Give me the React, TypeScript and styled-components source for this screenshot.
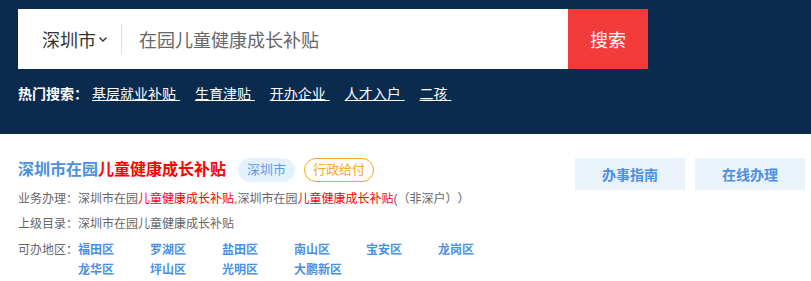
import React from "react";
import styled, { createGlobalStyle } from "styled-components";

const GlobalStyle = createGlobalStyle`
  body {
    margin: 0;
    background: #fff;
    font-family: "Liberation Sans", "Noto Sans CJK SC", sans-serif;
  }
`;

const Header = styled.header`
  height: 134px;
  box-sizing: border-box;
  padding: 9px 18px 0;
  background: #0a2a4e;
`;

const SearchBar = styled.div`
  display: flex;
  width: 630px;
  height: 60px;
  background: #fff;
`;

const CitySelect = styled.div`
  display: flex;
  align-items: center;
  padding-left: 24px;
  font-size: 18px;
  color: #333;

  svg {
    margin-left: 2px;
  }
`;

const Divider = styled.span`
  align-self: center;
  width: 1px;
  height: 30px;
  margin-left: 13px;
  background: #dedede;
`;

const Keyword = styled.div`
  flex: 1;
  display: flex;
  align-items: center;
  padding-left: 17px;
  font-size: 18px;
  color: #666;
`;

const SearchButton = styled.button`
  width: 80px;
  border: 0;
  background: #f23b3b;
  color: #fff;
  font-family: inherit;
  font-size: 18px;
  cursor: pointer;
`;

const HotRow = styled.div`
  display: flex;
  align-items: center;
  margin-top: 14px;
  height: 20px;
  font-size: 14px;
  color: #fff;
`;

const HotLabel = styled.span`
  font-weight: bold;
  margin-right: 4px;
`;

const HotLink = styled.a`
  color: #fff;
  text-decoration: underline;
  margin-right: 15px;
  white-space: pre;
`;

const Content = styled.section`
  display: flex;
  justify-content: space-between;
  align-items: flex-start;
  padding: 24px 6px 0 18px;
`;

const Info = styled.div`
  display: flex;
  flex-direction: column;
`;

const TitleRow = styled.div`
  display: flex;
  align-items: center;
  height: 24px;
  margin-bottom: 5px;
`;

const Title = styled.h1`
  margin: 0 12px 0 0;
  font-size: 16px;
  line-height: 24px;
  font-weight: bold;
  color: #4a90e2;
  white-space: nowrap;
`;

const Hit = styled.span`
  color: #ff0000;
`;

const Tag = styled.span<{ $variant: "area" | "type" }>`
  box-sizing: border-box;
  height: 24px;
  line-height: 22px;
  padding: 0 8px;
  margin-right: 9px;
  border-radius: 12px;
  font-size: 13px;
  border: 1px solid ${(p) => (p.$variant === "area" ? "#e5f1fd" : "#f5a623")};
  background: ${(p) => (p.$variant === "area" ? "#e5f1fd" : "#fff")};
  color: ${(p) => (p.$variant === "area" ? "#5a9be8" : "#f5a623")};
`;

const Line = styled.div`
  display: flex;
  font-size: 12px;
  line-height: 25px;
  color: #666;
  text-spacing-trim: space-all;
`;

const Label = styled.span`
  flex: none;
`;

const Regions = styled.div`
  display: flex;
  margin-top: 3px;
  font-size: 12px;
  line-height: 20px;
  color: #666;
`;

const RegionGrid = styled.div`
  display: grid;
  grid-template-columns: repeat(6, 72px);
`;

const Region = styled.a`
  color: #4a8fe6;
  font-weight: bold;
  text-decoration: none;
`;

const Actions = styled.div`
  display: flex;
  gap: 10px;
`;

const ActionButton = styled.button`
  width: 110px;
  height: 32px;
  border: 0;
  background: #eaf3fb;
  color: #4a90e2;
  font-family: inherit;
  font-size: 14px;
  font-weight: bold;
  cursor: pointer;
`;

const hotSearches = ["基层就业补贴", "生育津贴", "开办企业", "人才入户", "二孩"];
const regions = [
  "福田区", "罗湖区", "盐田区", "南山区", "宝安区", "龙岗区",
  "龙华区", "坪山区", "光明区", "大鹏新区",
];

const Chevron = () => (
  <svg width="10" height="10" viewBox="0 0 10 10">
    <path d="M1.5 3.5 L5 7 L8.5 3.5" fill="none" stroke="#333" strokeWidth="1.4" />
  </svg>
);

const App = () => {
  return (
    <>
      <GlobalStyle />
      <Header>
        <SearchBar>
          <CitySelect>
            深圳市
            <Chevron />
          </CitySelect>
          <Divider />
          <Keyword>在园儿童健康成长补贴</Keyword>
          <SearchButton>搜索</SearchButton>
        </SearchBar>
        <HotRow>
          <HotLabel>热门搜索：</HotLabel>
          {hotSearches.map((item) => (
            <HotLink key={item}>{item + " "}</HotLink>
          ))}
        </HotRow>
      </Header>
      <Content>
        <Info>
          <TitleRow>
            <Title>
              深圳市在园<Hit>儿童健康成长补贴</Hit>
            </Title>
            <Tag $variant="area">深圳市</Tag>
            <Tag $variant="type">行政给付</Tag>
          </TitleRow>
          <Line>
            <Label>业务办理：</Label>
            <span>
              深圳市在园<Hit>儿童健康成长补贴</Hit>,深圳市在园<Hit>儿童健康成长补贴</Hit>(（非深户））
            </span>
          </Line>
          <Line>
            <Label>上级目录：</Label>
            <span>深圳市在园儿童健康成长补贴</span>
          </Line>
          <Regions>
            <Label>可办地区：</Label>
            <RegionGrid>
              {regions.map((r) => (
                <Region key={r}>{r}</Region>
              ))}
            </RegionGrid>
          </Regions>
        </Info>
        <Actions>
          <ActionButton>办事指南</ActionButton>
          <ActionButton>在线办理</ActionButton>
        </Actions>
      </Content>
    </>
  );
};

export default App;
